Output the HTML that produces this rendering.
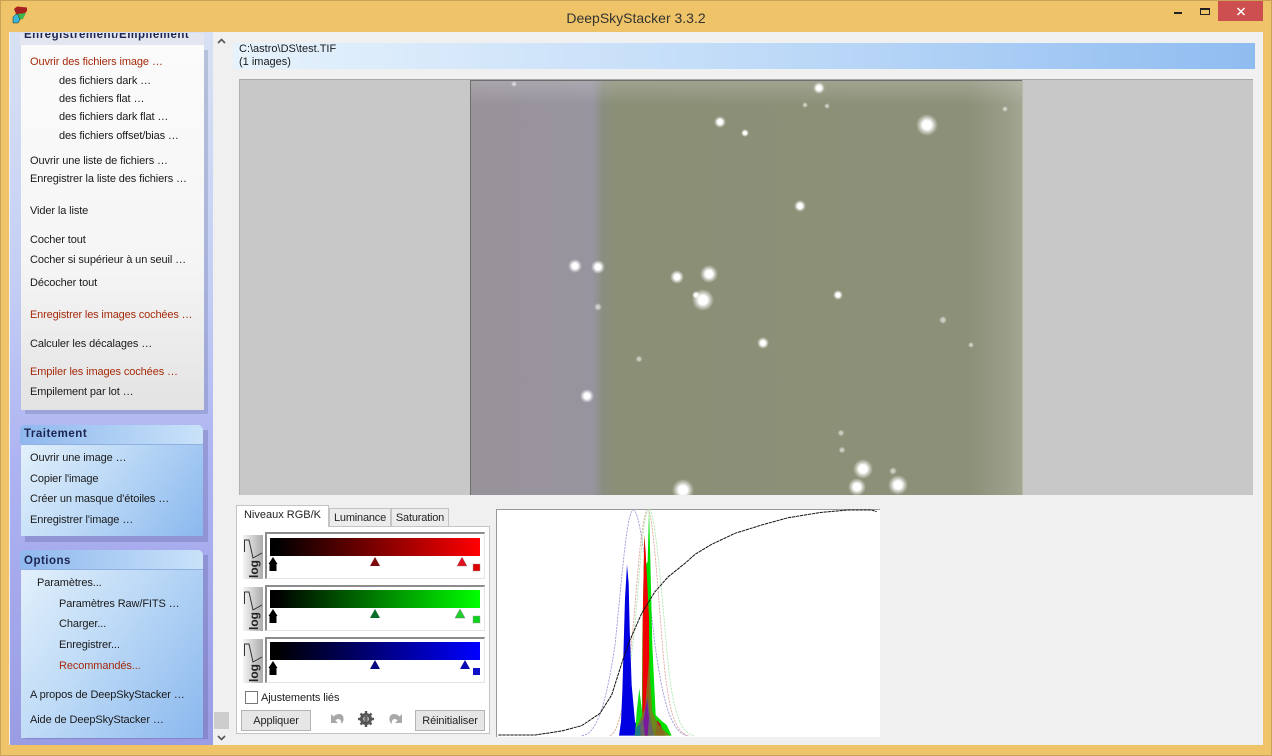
<!DOCTYPE html>
<html><head><meta charset="utf-8"><title>DeepSkyStacker 3.3.2</title>
<style>
html,body{margin:0;padding:0;width:1272px;height:756px;overflow:hidden;background:#efc469;}
body{position:relative;font-family:"Liberation Sans",sans-serif;font-size:11px;color:#111;}
.a{position:absolute;}
.t{position:absolute;white-space:nowrap;line-height:14px;font-size:11px;letter-spacing:-.11px;color:#1a1a1a;margin-top:1px;}
.r{color:#a52a0a;}
.hd{position:absolute;white-space:nowrap;font-weight:bold;font-size:11.5px;letter-spacing:.5px;color:#1c2450;line-height:14px;}
.tab{position:absolute;box-sizing:border-box;border:1px solid #c4c4c4;border-bottom:none;background:#ececec;text-align:center;line-height:18px;font-size:11px;letter-spacing:-.2px;color:#222;}
.btn{position:absolute;box-sizing:border-box;border:1px solid #b4b4b4;background:#e6e6e6;text-align:center;font-size:11px;letter-spacing:-.1px;line-height:20px;color:#222;}
.box{position:absolute;left:265px;width:220px;box-sizing:border-box;background:#fff;border:1px solid #e4e4e4;border-top:2px solid #8c8c8c;border-left:2px solid #8c8c8c;}
.bar{position:absolute;left:270px;width:210px;height:18px;}
</style></head><body>
<div class="a" style="left:0;top:0;width:1272px;height:756px;box-sizing:border-box;border:1px solid #c9a25a;"></div>
<div class="t" style="left:0;width:1272px;top:9px;text-align:center;font-size:14px;letter-spacing:0;line-height:17px;color:#333;">DeepSkyStacker 3.3.2</div>

<svg class="a" style="left:11px;top:6px" width="20" height="20" viewBox="0 0 20 20">
<path d="M3 3 L6 0.500 L16 1.500 L16 5 L13 8 L5 8 Z" fill="#a8201f"/>
<path d="M6 8 L15 7 L12 13 L7 14 Z" fill="#3fb54a"/>
<path d="M2 11 L5 8 L7 9 L9 14 L7 17 L2 17 Z" fill="#3bb6d6" stroke="#222" stroke-width=".5"/>
</svg>

<div class="a" style="left:1174px;top:12px;width:8px;height:2px;background:#222;"></div>
<div class="a" style="left:1200px;top:8px;width:10px;height:7px;box-sizing:border-box;border:1px solid #222;border-top:2px solid #222;"></div>
<div class="a" style="left:1218px;top:1px;width:45px;height:20px;background:#cd4f4f;"></div>
<svg class="a" style="left:1236px;top:7px" width="10" height="9"><path d="M1.500 1 L8.500 8 M8.500 1 L1.500 8" stroke="#fff" stroke-width="1.500"/></svg>

<!-- client -->
<div class="a" style="left:9px;top:32px;width:1254px;height:713px;background:#f0f0f0;"></div>
<div class="a" style="left:10px;top:32px;width:203px;height:713px;background:linear-gradient(180deg,#d8e1f3 0%,#c4cef4 35%,#aeb4f2 60%,#9a9ce4 100%);"></div>

<!-- panel 1 -->
<div class="a" style="left:25px;top:50px;width:183px;height:364px;background:rgba(70,80,130,.22);"></div>
<div class="a" style="left:20px;top:33px;width:184px;height:12px;background:#e3e6ee;overflow:hidden;"><div class="hd" style="left:4px;top:-5px;">Enregistrement/Empilement</div></div>
<div class="a" style="left:21px;top:45px;width:183px;height:365px;background:linear-gradient(180deg,#fbfbfb 0%,#f5f5f5 60%,#e3e3e3 100%);"></div>
<div class="t r" style="left:30px;top:54px;">Ouvrir des fichiers image …</div>
<div class="t" style="left:59px;top:73px;">des fichiers dark …</div>
<div class="t" style="left:59px;top:91px;">des fichiers flat …</div>
<div class="t" style="left:59px;top:109px;">des fichiers dark flat …</div>
<div class="t" style="left:59px;top:128px;">des fichiers offset/bias …</div>
<div class="t" style="left:30px;top:153px;">Ouvrir une liste de fichiers …</div>
<div class="t" style="left:30px;top:171px;">Enregistrer la liste des fichiers …</div>
<div class="t" style="left:30px;top:203px;">Vider la liste</div>
<div class="t" style="left:30px;top:232px;">Cocher tout</div>
<div class="t" style="left:30px;top:252px;">Cocher si supérieur à un seuil …</div>
<div class="t" style="left:30px;top:275px;">Décocher tout</div>
<div class="t r" style="left:30px;top:307px;letter-spacing:-.16px;">Enregistrer les images cochées …</div>
<div class="t" style="left:30px;top:336px;">Calculer les décalages …</div>
<div class="t r" style="left:30px;top:364px;">Empiler les images cochées …</div>
<div class="t" style="left:30px;top:384px;">Empilement par lot …</div>

<!-- panel 2 -->
<div class="a" style="left:25px;top:430px;width:183px;height:112px;background:rgba(60,60,120,.22);"></div>
<div class="a" style="left:20px;top:425px;width:183px;height:19px;border-radius:5px 5px 0 0;background:linear-gradient(90deg,#8fb8ee,#c9e2f9);"></div>
<div class="a" style="left:21px;top:444px;width:182px;height:92px;background:linear-gradient(125deg,#e2f0fb 0%,#bcd9f6 45%,#8ab8ee 100%);border-top:1px solid #8fb0e0;box-sizing:border-box;"></div>
<div class="hd" style="left:24px;top:427px;">Traitement</div>
<div class="t" style="left:30px;top:450px;">Ouvrir une image …</div>
<div class="t" style="left:30px;top:471px;">Copier l'image</div>
<div class="t" style="left:30px;top:491px;">Créer un masque d'étoiles …</div>
<div class="t" style="left:30px;top:512px;">Enregistrer l'image …</div>

<!-- panel 3 -->
<div class="a" style="left:25px;top:555px;width:183px;height:184px;background:rgba(60,60,120,.22);"></div>
<div class="a" style="left:20px;top:550px;width:183px;height:19px;border-radius:5px 5px 0 0;background:linear-gradient(90deg,#8fb8ee,#c9e2f9);"></div>
<div class="a" style="left:21px;top:569px;width:182px;height:169px;background:linear-gradient(125deg,#e2f0fb 0%,#bcd9f6 45%,#8ab8ee 100%);border-top:1px solid #8fb0e0;box-sizing:border-box;"></div>
<div class="hd" style="left:24px;top:554px;">Options</div>
<div class="t" style="left:37px;top:575px;">Paramètres...</div>
<div class="t" style="left:59px;top:596px;">Paramètres Raw/FITS …</div>
<div class="t" style="left:59px;top:616px;">Charger...</div>
<div class="t" style="left:59px;top:637px;">Enregistrer...</div>
<div class="t r" style="left:59px;top:658px;">Recommandés...</div>
<div class="t" style="left:30px;top:687px;">A propos de DeepSkyStacker …</div>
<div class="t" style="left:30px;top:712px;">Aide de DeepSkyStacker …</div>

<!-- scrollbar -->
<div class="a" style="left:214px;top:712px;width:15px;height:17px;background:#cdcdcd;"></div>
<svg class="a" style="left:217px;top:38px" width="9" height="6"><path d="M1 5 L4.500 1.500 L8 5" fill="none" stroke="#555" stroke-width="1.600"/></svg>
<svg class="a" style="left:217px;top:735px" width="9" height="6"><path d="M1 1 L4.500 4.500 L8 1" fill="none" stroke="#555" stroke-width="1.600"/></svg>

<!-- path strip -->
<div class="a" style="left:233px;top:43px;width:1022px;height:26px;background:linear-gradient(90deg,#e6f2fc 0%,#d4e7fa 25%,#b8d6f7 60%,#8fbcf0 100%);"></div>
<div class="t" style="left:239px;top:42px;line-height:13px;letter-spacing:0;">C:\astro\DS\test.TIF<br>(1 images)</div>

<!-- image viewer -->
<div class="a" style="left:239px;top:79px;width:1014px;height:416px;background:#c8c8c8;border-top:1px solid #a8a8a8;border-left:1px solid #b0b0b0;box-sizing:border-box;"></div>
<svg class="a" style="left:470px;top:80px" width="553" height="415" viewBox="470 80 553 415">
<defs>
<radialGradient id="s"><stop offset="0" stop-color="#fff"/><stop offset=".4" stop-color="#fff"/><stop offset=".7" stop-color="#fff" stop-opacity=".45"/><stop offset="1" stop-color="#fff" stop-opacity="0"/></radialGradient>
<linearGradient id="bg" x1="0" x2="1" y1="0" y2="0">
<stop offset="0" stop-color="#989299"/><stop offset=".22" stop-color="#98949f"/><stop offset=".24" stop-color="#8a8e80"/><stop offset=".26" stop-color="#8a8f76"/><stop offset=".9" stop-color="#8d9078"/><stop offset=".97" stop-color="#9a9d88"/><stop offset="1" stop-color="#a3a692"/>
</linearGradient>
<linearGradient id="top" x1="0" x2="0" y1="0" y2="1"><stop offset="0" stop-color="#fff" stop-opacity=".18"/><stop offset="1" stop-color="#fff" stop-opacity="0"/></linearGradient>
</defs>
<rect x="471" y="81" width="552" height="414" fill="url(#bg)"/>
<rect x="471" y="81" width="552" height="24" fill="url(#top)"/>
<path d="M470.500 80 V495 M470 80.500 H1023" stroke="#6e6e6e" fill="none"/>
<path d="M1022.500 80 V495" stroke="#b6b8a6" fill="none"/>
<g fill="url(#s)">
<circle cx="819" cy="88" r="6"/><circle cx="720" cy="122" r="6"/><circle cx="745" cy="133" r="4"/><circle cx="927" cy="125" r="11"/>
<circle cx="800" cy="206" r="6"/><circle cx="575" cy="266" r="7"/><circle cx="598" cy="267" r="7"/><circle cx="677" cy="277" r="7"/>
<circle cx="709" cy="274" r="9"/><circle cx="703" cy="300" r="11"/><circle cx="696" cy="295" r="4"/><circle cx="838" cy="295" r="5"/>
<circle cx="587" cy="396" r="7"/><circle cx="863" cy="469" r="10"/><circle cx="857" cy="487" r="9"/><circle cx="898" cy="485" r="10"/>
<circle cx="683" cy="490" r="11"/><circle cx="763" cy="343" r="6"/>
</g>
<g fill="url(#s)" opacity=".55">
<circle cx="598" cy="307" r="4"/><circle cx="943" cy="320" r="4"/><circle cx="639" cy="359" r="3.500"/>
<circle cx="841" cy="433" r="3.500"/><circle cx="842" cy="450" r="3.500"/><circle cx="893" cy="471" r="4"/>
<circle cx="971" cy="345" r="3"/><circle cx="805" cy="105" r="3"/><circle cx="827" cy="106" r="3"/><circle cx="514" cy="84" r="3"/>
<circle cx="1005" cy="109" r="3"/>
</g>
</svg>

<!-- tabs -->
<div class="a" style="left:236px;top:526px;width:254px;height:208px;box-sizing:border-box;background:#fff;border:1px solid #c4c4c4;"></div>
<div class="tab" style="left:329px;top:508px;width:62px;height:18px;line-height:18px;">Luminance</div>
<div class="tab" style="left:391px;top:508px;width:58px;height:18px;line-height:18px;">Saturation</div>
<div class="tab" style="left:236px;top:505px;width:93px;height:22px;background:#fff;line-height:19px;letter-spacing:0;">Niveaux RGB/K</div>

<!-- sliders -->
<div class="box" style="top:532px;height:47px;"></div>
<div class="box" style="top:585px;height:46px;"></div>
<div class="box" style="top:637px;height:46px;"></div>
<div class="bar" style="top:538px;background:linear-gradient(90deg,#000 0%,#000 3%,#ff0000 100%);"></div>
<div class="bar" style="top:590px;background:linear-gradient(90deg,#000 0%,#000 3%,#00ff00 100%);"></div>
<div class="bar" style="top:642px;background:linear-gradient(90deg,#000 0%,#000 3%,#0000ff 100%);"></div>

<svg class="a" style="left:240px;top:530px" width="245" height="160" viewBox="240 530 245 160">
<defs><linearGradient id="lg" x1="0" x2="1" y1="0" y2="0"><stop offset="0" stop-color="#f4f4f4"/><stop offset="1" stop-color="#aaa"/></linearGradient></defs>
<rect x="243" y="535" width="20" height="44" fill="url(#lg)"/>
<path d="M244.500 552 V540 H249 L253 558 L262 553" fill="none" stroke="#333" stroke-width="1"/>
<text transform="translate(258,578) rotate(-90)" font-family="Liberation Sans,sans-serif" font-size="12" font-weight="bold" fill="#222">log</text>
<rect x="243" y="587" width="20" height="44" fill="url(#lg)"/>
<path d="M244.500 604 V592 H249 L253 610 L262 605" fill="none" stroke="#333"/>
<text transform="translate(258,630) rotate(-90)" font-family="Liberation Sans,sans-serif" font-size="12" font-weight="bold" fill="#222">log</text>
<rect x="243" y="639" width="20" height="44" fill="url(#lg)"/>
<path d="M244.500 656 V644 H249 L253 662 L262 657" fill="none" stroke="#333"/>
<text transform="translate(258,682) rotate(-90)" font-family="Liberation Sans,sans-serif" font-size="12" font-weight="bold" fill="#222">log</text>

<path d="M273 557 L277.500 564 H276.500 V571 H269.500 V564 H268.500 Z" fill="#000"/>
<path d="M273 609 L277.500 616 H276.500 V623 H269.500 V616 H268.500 Z" fill="#000"/>
<path d="M273 661 L277.500 668 H276.500 V675 H269.500 V668 H268.500 Z" fill="#000"/>

<path d="M375 557 L380 566 H370 Z" fill="#7d0a0a"/>
<path d="M462 557 L467 566 H457 Z" fill="#e01020" stroke="#888" stroke-width=".4"/>
<rect x="473" y="564" width="7" height="7" fill="#dd0000" stroke="#999" stroke-width=".4"/>
<path d="M375 609 L380 618 H370 Z" fill="#0a6e2a"/>
<path d="M460 609 L465 618 H455 Z" fill="#20d030" stroke="#666" stroke-width=".4"/>
<rect x="473" y="616" width="7" height="7" fill="#10d020" stroke="#999" stroke-width=".4"/>
<path d="M375 660 L380 669 H370 Z" fill="#0a0a80"/>
<path d="M465 660 L470 669 H460 Z" fill="#0a0ab0"/>
<rect x="473" y="668" width="7" height="7" fill="#1010c8"/>
</svg>

<!-- checkbox -->
<div class="a" style="left:245px;top:691px;width:13px;height:13px;box-sizing:border-box;border:1px solid #777;background:#fff;"></div>
<div class="t" style="left:261px;top:690px;color:#222;">Ajustements liés</div>

<!-- buttons -->
<div class="btn" style="left:241px;top:710px;width:70px;height:21px;">Appliquer</div>
<div class="btn" style="left:415px;top:710px;width:70px;height:21px;">Réinitialiser</div>
<svg class="a" style="left:328px;top:710px" width="76" height="20" viewBox="328 710 76 20">
<path d="M331 714 V723 H338 L335.500 720.500 C337 718.500 340 718.500 341 721 L341.500 724 C345 720 344 714.500 339.500 714 C337 713.800 335 715 333.500 716.500 Z" fill="#a8a8a8"/>
<path d="M402 714 V723 H395 L397.500 720.500 C396 718.500 393 718.500 392 721 L391.500 724 C388 720 389 714.500 393.500 714 C396 713.800 398 715 399.500 716.500 Z" fill="#a8a8a8"/>
<circle cx="366" cy="719" r="6" fill="#555"/>
<path d="M366 711 V727 M358 719 H374 M360.500 713.500 L371.500 724.500 M371.500 713.500 L360.500 724.500" stroke="#555" stroke-width="2.400"/>
<circle cx="366" cy="719" r="3" fill="#bbb"/><path d="M364.500 715 h3 v7 h-3z" fill="#666"/>
</svg>

<!-- histogram -->
<div class="a" style="left:496px;top:509px;width:384px;height:228px;background:#fff;border-left:1px solid #999;border-top:1px solid #999;box-sizing:border-box;"></div>
<svg class="a" style="left:495px;top:505px" width="390" height="240" viewBox="0 0 1170 720">
<path d="M260 692 C300 690 330 620 360 420 C380 230 395 15 415 15 C435 15 455 200 480 420 C505 600 530 680 575 692" fill="none" stroke="#9a9ad8" stroke-width="2.500" stroke-dasharray="7 3"/>
<path d="M345 692 C380 680 410 500 430 240 C440 110 450 12 462 12 C478 12 495 200 515 430 C530 600 550 680 595 692" fill="none" stroke="#b0e8b0" stroke-width="2.500" stroke-dasharray="7 3"/>
<path d="M345 692 C380 680 405 500 425 240 C435 110 448 15 458 15 C472 15 485 200 503 430 C518 600 535 680 580 692" fill="none" stroke="#e0a8a0" stroke-width="2.500" stroke-dasharray="7 3"/>
<path d="M372 692 L378 650 L382 560 L386 420 L390 280 L396 178 L401 235 L404 370 L410 540 L420 650 L440 692 Z" fill="#0000e0"/>
<path d="M420 692 L425 620 L433 550 L441 620 L444 692 Z" fill="#10e010"/>
<path d="M440 692 L442 400 L448 90 L452 180 L458 170 L462 12 L466 165 L472 420 L482 630 L500 648 L515 660 L530 692 Z" fill="#00e000"/>
<path d="M442 692 L443 350 L448 90 L452 140 L458 260 L462 340 L464 692 Z" fill="#f00000"/>
<path d="M480 692 L486 645 L495 655 L510 692 Z" fill="#b02020"/>
<path d="M418 692 L428 660 L450 610 L462 460 L472 620 L490 660 L525 692 Z" fill="#807820" opacity=".85"/>
<path d="M418 692 L425 665 L445 640 L458 575 L468 650 L478 692 Z" fill="#666"/>
<path d="M418 692 L425 665 L436 660 L436 692 Z" fill="#1a7a8a"/>
<path d="M445 650 L456 580 L462 640 L458 692 H450 Z" fill="#7a1a9a"/>
<path d="M10 690 L120 690 L200 678 L260 662 L315 625 L350 570 L385 460 L405 405 L440 325 L480 260 L520 215 L570 175 L600 148 L650 118 L720 85 L800 60 L880 38 L980 22 L1060 15 L1130 15 L1145 20" fill="none" stroke="#111" stroke-width="3" stroke-dasharray="10 2"/>
</svg>
</body></html>
